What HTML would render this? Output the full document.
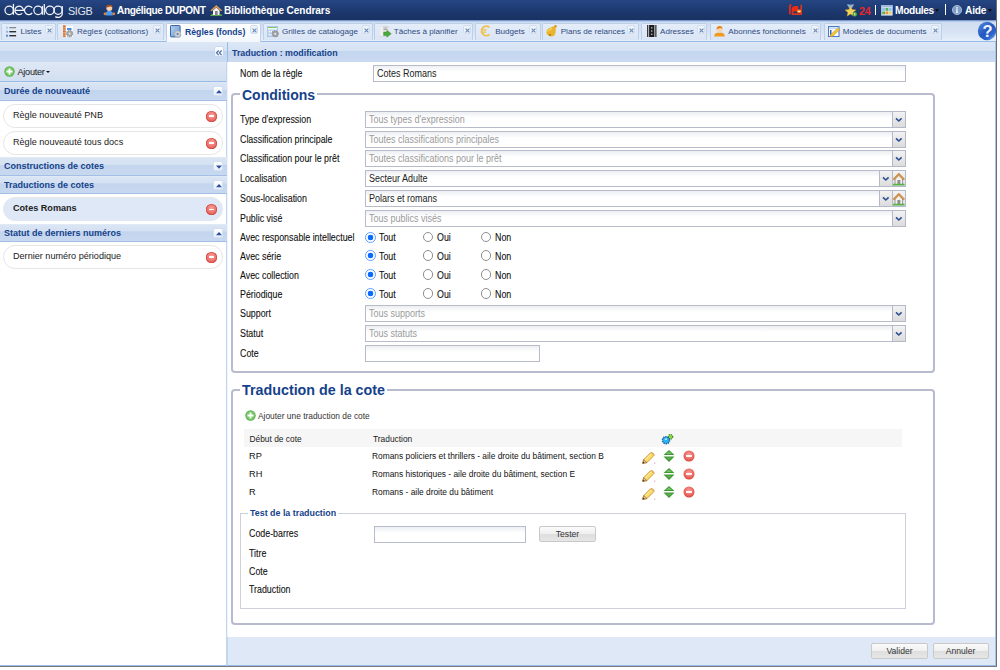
<!DOCTYPE html>
<html><head><meta charset="utf-8">
<style>
*{box-sizing:border-box;margin:0;padding:0}
html,body{width:1000px;height:670px;overflow:hidden;background:#fff;font-family:"Liberation Sans",sans-serif;}
.a{position:absolute}
svg{display:block}
.tab svg{display:block}
#frame{position:absolute;left:0;top:0;width:997px;height:667px;border-right:1px solid #6e6e6e;border-bottom:1px solid #7a7a7a;overflow:hidden}
#hdr{left:0;top:0;width:996px;height:20px;background:linear-gradient(#254583,#1c386e 60%,#1a3161)}
#tabs{left:0;top:20px;width:996px;height:22px;background:linear-gradient(#5a7ab4 0,#9ab8e4 1px,#d0ddf1 2px,#d8e4f4 60%,#e6eefa);border-bottom:1px solid #99bbe8}
.tab{position:absolute;top:3px;height:17px;border:1px solid #bcd0ea;border-bottom:none;border-radius:2px 2px 0 0;background:linear-gradient(#e4edf9,#dae5f5);font-size:8.1px;color:#2e4a80;white-space:nowrap}
.tab.act{height:19px;background:linear-gradient(#ffffff,#f3f7fc);color:#15428b;font-weight:bold;font-size:8.7px;z-index:2}
.tab .tt{top:2px;line-height:12px}
.tab .x{position:absolute;top:1px;width:8px;height:9px;border:1px solid #d0def0;border-radius:2px;background:#eef4fb}
.ph{height:20px;padding-top:1.5px;background:linear-gradient(#dde8f6 0%,#d5e2f3 45%,#c4d6ef 47%,#c9daf1 100%);color:#15428b;font-weight:bold;font-size:8.85px;line-height:19px;white-space:nowrap}
.lbl{position:absolute;font-size:10px;transform:scaleX(0.885);transform-origin:0 0;color:#111;white-space:nowrap;line-height:12px;-webkit-text-stroke:0.1px #111}
.cmb{position:absolute;height:17px;border:1px solid #b8bbc9;background:linear-gradient(#eceef2 0,#fff 6px);font-size:10px;line-height:16px;padding-left:3px;color:#222;white-space:nowrap}
.cmb .t{display:inline-block;transform:scaleX(0.9);transform-origin:0 0}
.cmb.ph2{color:#9a9a9a}
.trg{position:absolute;top:-1px;width:14px;height:17px;border:1px solid #b5b8c8;background:linear-gradient(#f2f2f2,#dcdcdc)}
.trg svg{position:absolute;left:3px;top:5px}
.rad{position:absolute;width:10.5px;height:10.5px;border-radius:50%;border:1px solid #8f8f8f;background:#fff}
.rad.on{width:11px;height:11px;border:1.5px solid #5aa2ff;background:radial-gradient(circle,#0b6bff 0 2.6px,#fff 3.1px)}
.fs{position:absolute;border:2px solid #b8bbcd;border-radius:4px}
.leg{position:absolute;background:#fff;color:#15428b;font-weight:bold;white-space:nowrap;padding:0 2px}
.grp{position:absolute;left:0;width:227px;height:19px;background:linear-gradient(#e6eef9 0,#dae5f4 1px,#d4e1f2 42%,#c3d5ee 45%,#c7d8ef 100%);border-bottom:1px solid #a3bfe6;color:#15428b;font-weight:bold;font-size:9px;line-height:18px;padding-left:4px;white-space:nowrap}
.tool{position:absolute;width:10px;height:10px;border:1px solid #d2e0f2;border-radius:2px;background:linear-gradient(#ffffff,#e6eef9)}
.item{position:absolute;left:3px;width:220px;height:24px;border:1px solid #e6e6e6;border-radius:12px;background:#fff;font-size:9.1px;color:#1a1a1a;line-height:21px;padding-left:9px;white-space:nowrap}
.del{position:absolute;width:11px;height:11px;border-radius:50%;background:radial-gradient(circle at 50% 40%,#f7a4a0 0,#ec6f68 55%,#d9443c 100%);box-shadow:inset 0 0 0 0.6px #c9403a}
.del:after{content:"";position:absolute;left:2.6px;top:4.6px;width:5.8px;height:1.8px;background:#fff;border-radius:0.5px}
.btn{position:absolute;height:16px;border:1px solid #c9c9c9;border-radius:2px;background:linear-gradient(#fbfbfb 0%,#efefef 50%,#dedede 51%,#e6e6e6 100%);font-size:8.6px;color:#333;text-align:center;line-height:14.5px}
.tr{position:absolute;font-size:8.4px;color:#111;white-space:nowrap;line-height:10px}
</style></head><body>
<div id="frame">
  <div id="hdr" class="a">
    <svg class="a" style="left:0;top:0" width="66" height="20" viewBox="0 0 66 20" fill="none" stroke="#f4f6fa" stroke-width="1.25"><circle cx="9.2" cy="10.35" r="4.25"/><path d="M13.45 3.9 V14.7"/><path d="M14.9 10.35 H23.4 A4.25 4.25 0 1 0 22.2 13.4"/><path d="M32.2 7.9 A4.25 4.25 0 1 0 32.2 12.8"/><circle cx="38.1" cy="10.35" r="4.25"/><path d="M42.35 6.1 V14.7"/><path d="M44.3 3.9 V14.7"/><circle cx="49.9" cy="10.35" r="4.25"/><circle cx="58.1" cy="10.2" r="4.1"/><path d="M62.2 6.1 V14.2 A4.2 3.2 0 0 1 55.3 16.6"/></svg>
    <div class="a" style="left:68px;top:3.5px;font-size:10.8px;color:#e2e6ec;line-height:14px;letter-spacing:-0.4px">SIGB</div>
    <svg class="a" style="left:103px;top:4px" width="13" height="12" viewBox="0 0 13 12"><path d="M2.8 11.5 L3 8.6 Q3.6 6.7 6.3 6.7 Q9 6.7 9.6 8.6 L9.8 11.5Z" fill="#4d9af0"/><circle cx="6.3" cy="3.9" r="3" fill="#f6d2ae"/><path d="M3.2 3.8 Q3.2 0.8 6.3 0.8 Q9.4 0.8 9.4 3.6 Q8 2.3 6.3 2.7 Q4.6 3 3.2 3.8Z" fill="#a0521a"/><circle cx="2" cy="9.8" r="1.4" fill="#e88a32"/><circle cx="10.8" cy="9.8" r="1.4" fill="#e88a32"/></svg>
    <div class="a" style="left:117px;top:4.4px;font-size:10.1px;font-weight:bold;color:#fff;line-height:14px;letter-spacing:-0.35px">Angélique DUPONT</div>
    <svg class="a" style="left:210px;top:4px" width="13" height="12" viewBox="0 0 13 12"><path d="M3 6.6 L6.3 3.6 L9.6 6.6 V11.3 H3Z" fill="#f4f4f4"/><path d="M0.3 6.4 L6.3 1 L12.3 6.4 L10.9 7.3 L6.3 3.2 L1.7 7.3Z" fill="#d99a4e"/><rect x="5" y="7" width="2.7" height="4.3" fill="#858585"/><path d="M0.3 11.6 Q0.8 9.7 3 9.9 V11.6Z M9.6 9.9 Q11.8 9.7 12.3 11.6 H9.6Z" fill="#5cb04a"/><rect x="0.5" y="11" width="11.6" height="0.8" fill="#5cb04a"/></svg>
    <div class="a" style="left:224px;top:4.4px;font-size:10.1px;font-weight:bold;color:#fff;line-height:14px;letter-spacing:-0.1px">Bibliothèque Cendrars</div>
    <svg class="a" style="left:789px;top:4px" width="14" height="11" viewBox="0 0 14 11"><path d="M2.3 0.8 Q0.8 1 0.8 3 V10.2" stroke="#f02a10" stroke-width="1.9" fill="none"/><path d="M12.2 0.8 V10.2 H3.5 V3.5" stroke="#d8341e" stroke-width="1.7" fill="none"/><path d="M3.5 3.5 Q4 2 6 2 H8.8 Q9.6 2.5 9.3 5 L7.5 7.5 H3.5Z" fill="#f02a10"/><rect x="8" y="5.5" width="4" height="3.6" rx="1" fill="#f07a10"/><rect x="8.8" y="6.8" width="2.6" height="1" fill="#fff"/></svg>
    <svg class="a" style="left:844px;top:4px" width="14" height="13" viewBox="0 0 14 13"><path d="M2.8 0.5 H10.2 L8 4 H5Z" fill="#7f9fc8"/><path d="M4 0.5 L6.5 3.5 L9 0.5" stroke="#b8cce6" stroke-width="0.8" fill="none"/><path d="M6.5 2.3 L8.1 5.6 L11.8 6 L9 8.4 L9.8 12 L6.5 10.1 L3.2 12 L4 8.4 L1.2 6 L4.9 5.6Z" fill="#f5d35a" stroke="#d8a830" stroke-width="0.5"/><circle cx="10.8" cy="10.2" r="2.2" fill="#4aa83a"/><rect x="10.3" y="9" width="1" height="2.4" fill="#e0f0d8"/></svg>
    <div class="a" style="left:859px;top:4.2px;font-size:10.8px;font-weight:bold;color:#e8262a;line-height:14px;letter-spacing:-0.3px">24</div>
    <div class="a" style="left:875px;top:4.5px;width:1.2px;height:10px;background:#fff"></div>
    <svg class="a" style="left:880.5px;top:5px" width="12" height="11" viewBox="0 0 12 11"><rect x="0.3" y="0.3" width="11.2" height="10" fill="#dfeaf6" stroke="#a8c0de" stroke-width="0.6"/><rect x="0.3" y="0.3" width="11.2" height="2" fill="#9cb8e0"/><rect x="1.2" y="3" width="2.8" height="2.8" fill="#8cc0f0"/><rect x="4.5" y="3" width="2.8" height="2.8" fill="#58b048"/><rect x="7.8" y="3" width="2.8" height="2.8" fill="#8cc0f0"/><rect x="1.2" y="6.5" width="2.8" height="2.8" fill="#58b048"/><rect x="4.5" y="6.5" width="2.8" height="2.8" fill="#f0904a"/><rect x="7.8" y="6.5" width="2.8" height="2.8" fill="#f0d060"/></svg>
    <div class="a" style="left:895px;top:4.4px;font-size:10.2px;font-weight:bold;color:#fff;line-height:14px;letter-spacing:-0.35px">Modules</div>
    <div class="a" style="left:935px;top:9px;width:0;height:0;border-left:2.5px solid transparent;border-right:2.5px solid transparent;border-top:3px solid #111"></div>
    <div class="a" style="left:945px;top:4px;width:1.2px;height:11px;background:#fff"></div>
    <svg class="a" style="left:951.5px;top:5px" width="10" height="10" viewBox="0 0 10 10"><circle cx="5" cy="5" r="4.6" fill="#7f9cc8" stroke="#b8cae4" stroke-width="0.8"/><circle cx="5" cy="2.9" r="0.8" fill="#fff"/><path d="M4.3 4.3 H5.6 V7.4 H6.3 V8 H3.8 V7.4 H4.4Z" fill="#fff"/></svg>
    <div class="a" style="left:965px;top:4.4px;font-size:10.2px;font-weight:bold;color:#fff;line-height:14px;letter-spacing:-0.2px">Aide</div>
    <div class="a" style="left:988px;top:9px;width:0;height:0;border-left:2.5px solid transparent;border-right:2.5px solid transparent;border-top:3px solid #111"></div>
  </div>
  <div id="tabs" class="a">
<div class="tab" style="left:1px;width:55px"><span class="a tt" style="left:18.5px">Listes</span><span class="x" style="left:42.8px"><svg class="a" style="left:1.2px;top:1.6px" width="5" height="5" viewBox="0 0 5 5"><path d="M0.6 0.6 L4.4 4.4 M4.4 0.6 L0.6 4.4" stroke="#6f8cba" stroke-width="1.2"/></svg></span></div>
<div class="tab" style="left:57px;width:107px"><span class="a tt" style="left:19px">Règles (cotisations)</span><span class="x" style="left:94.8px"><svg class="a" style="left:1.2px;top:1.6px" width="5" height="5" viewBox="0 0 5 5"><path d="M0.6 0.6 L4.4 4.4 M4.4 0.6 L0.6 4.4" stroke="#6f8cba" stroke-width="1.2"/></svg></span></div>
<div class="tab act" style="left:166px;width:95px"><span class="a tt" style="left:18px">Règles (fonds)</span><span class="x" style="left:83.3px"><svg class="a" style="left:1.2px;top:1.6px" width="5" height="5" viewBox="0 0 5 5"><path d="M0.6 0.6 L4.4 4.4 M4.4 0.6 L0.6 4.4" stroke="#6f8cba" stroke-width="1.2"/></svg></span></div>
<div class="tab" style="left:263px;width:110px"><span class="a tt" style="left:18px">Grilles de catalogage</span><span class="x" style="left:98.3px"><svg class="a" style="left:1.2px;top:1.6px" width="5" height="5" viewBox="0 0 5 5"><path d="M0.6 0.6 L4.4 4.4 M4.4 0.6 L0.6 4.4" stroke="#6f8cba" stroke-width="1.2"/></svg></span></div>
<div class="tab" style="left:374px;width:99px"><span class="a tt" style="left:18.69999999999999px">Tâches à planifier</span><span class="x" style="left:87.8px"><svg class="a" style="left:1.2px;top:1.6px" width="5" height="5" viewBox="0 0 5 5"><path d="M0.6 0.6 L4.4 4.4 M4.4 0.6 L0.6 4.4" stroke="#6f8cba" stroke-width="1.2"/></svg></span></div>
<div class="tab" style="left:475px;width:66px"><span class="a tt" style="left:19.19999999999999px">Budgets</span><span class="x" style="left:52.8px"><svg class="a" style="left:1.2px;top:1.6px" width="5" height="5" viewBox="0 0 5 5"><path d="M0.6 0.6 L4.4 4.4 M4.4 0.6 L0.6 4.4" stroke="#6f8cba" stroke-width="1.2"/></svg></span></div>
<div class="tab" style="left:542px;width:97px"><span class="a tt" style="left:17.700000000000045px">Plans de relances</span><span class="x" style="left:84.3px"><svg class="a" style="left:1.2px;top:1.6px" width="5" height="5" viewBox="0 0 5 5"><path d="M0.6 0.6 L4.4 4.4 M4.4 0.6 L0.6 4.4" stroke="#6f8cba" stroke-width="1.2"/></svg></span></div>
<div class="tab" style="left:641px;width:66px"><span class="a tt" style="left:18px">Adresses</span><span class="x" style="left:54.8px"><svg class="a" style="left:1.2px;top:1.6px" width="5" height="5" viewBox="0 0 5 5"><path d="M0.6 0.6 L4.4 4.4 M4.4 0.6 L0.6 4.4" stroke="#6f8cba" stroke-width="1.2"/></svg></span></div>
<div class="tab" style="left:710px;width:111px"><span class="a tt" style="left:17.299999999999955px">Abonnés fonctionnels</span><span class="x" style="left:99.8px"><svg class="a" style="left:1.2px;top:1.6px" width="5" height="5" viewBox="0 0 5 5"><path d="M0.6 0.6 L4.4 4.4 M4.4 0.6 L0.6 4.4" stroke="#6f8cba" stroke-width="1.2"/></svg></span></div>
<div class="tab" style="left:824px;width:118px"><span class="a tt" style="left:17.799999999999955px">Modèles de documents</span><span class="x" style="left:105.8px"><svg class="a" style="left:1.2px;top:1.6px" width="5" height="5" viewBox="0 0 5 5"><path d="M0.6 0.6 L4.4 4.4 M4.4 0.6 L0.6 4.4" stroke="#6f8cba" stroke-width="1.2"/></svg></span></div>
<div class="a" style="left:6px;top:6px;z-index:3"><svg width="11" height="11" viewBox="0 0 11 11"><rect x="0" y="0.7" width="2" height="2" fill="#aacbf2"/><rect x="0" y="4.7" width="2" height="2" fill="#8db7ec"/><rect x="0" y="8.7" width="2" height="2" fill="#4f8fe2"/><rect x="3.3" y="1" width="6.8" height="1.3" fill="#8a8a8a"/><rect x="3.3" y="5" width="6.8" height="1.4" fill="#303030"/><rect x="3.3" y="9" width="6.8" height="1.4" fill="#303030"/></svg></div><div class="a" style="left:62px;top:5px;z-index:3"><svg width="13" height="13" viewBox="0 0 13 13"><rect x="1" y="0" width="2.6" height="12" fill="#ec9a62"/><path d="M1 1.5 H3.6 M1 4 H3.6 M1 6.5 H3.6 M1 9 H3.6 M1 11.3 H3.6" stroke="#c9662a" stroke-width="0.8"/><rect x="4" y="1" width="7" height="11" fill="#fbfcfe"/><rect x="5" y="3" width="4.5" height="2" fill="#4d8de0"/><circle cx="7.6" cy="8.6" r="3.1" fill="#a8a8a8" stroke="#8e8e8e" stroke-width="1.1" stroke-dasharray="1.2 0.9"/><circle cx="7.6" cy="8.6" r="1.1" fill="#e2e2e2"/></svg></div><div class="a" style="left:170px;top:5px;z-index:3"><svg width="13" height="13" viewBox="0 0 13 13"><defs><linearGradient id="bk" x1="0" y1="0" x2="1" y2="1"><stop offset="0" stop-color="#c4dcf2"/><stop offset="1" stop-color="#5a8ccb"/></linearGradient></defs><rect x="0.5" y="0.5" width="9.6" height="11.4" rx="0.7" fill="url(#bk)" stroke="#3b67a5" stroke-width="1"/><rect x="1.6" y="1.4" width="7.4" height="1" fill="#8eb2dc"/><circle cx="7.6" cy="9" r="3" fill="#d0d0d0" stroke="#b8b8b8" stroke-width="1.1" stroke-dasharray="1.2 0.9"/><circle cx="7.6" cy="9" r="1.1" fill="#4a80c8"/></svg></div><div class="a" style="left:267px;top:6px;z-index:3"><svg width="13" height="12" viewBox="0 0 13 12"><rect x="0.3" y="0.3" width="10.4" height="10.4" fill="#c0d6f0" stroke="#9fbbe4" stroke-width="0.6"/><rect x="1" y="1" width="9" height="1.2" fill="#80d060"/><rect x="1" y="2.2" width="9" height="1.2" fill="#ffffff"/><rect x="2" y="5" width="1.2" height="1.2" fill="#fff"/><rect x="4" y="5" width="1.2" height="1.2" fill="#fff"/><rect x="2" y="8" width="1.2" height="1.2" fill="#fff"/><rect x="4" y="8" width="1.2" height="1.2" fill="#fff"/><circle cx="8.2" cy="7.8" r="3" fill="#a2a2a2" stroke="#888" stroke-width="1.1" stroke-dasharray="1.2 0.9"/><circle cx="8.2" cy="7.8" r="1.1" fill="#e2eaf4"/></svg></div><div class="a" style="left:380px;top:6px;z-index:3"><svg width="12" height="12" viewBox="0 0 12 12"><rect x="0.3" y="0.2" width="7.7" height="10" fill="#e6e6e6" stroke="#c4c4c4" stroke-width="0.5"/><rect x="0.3" y="0.2" width="2.2" height="10" fill="#f4f4f4"/><path d="M3.5 2 H7 M3.5 3.5 H7" stroke="#9a9a9a" stroke-width="0.8"/><path d="M3.6 6 H6.8 V4.2 L11.3 7.7 L6.8 11.2 V9.4 H3.6Z" fill="#4aa83c" stroke="#2f8a2a" stroke-width="0.4"/></svg></div><div class="a" style="left:480px;top:5px;z-index:3"><svg width="11" height="12" viewBox="0 0 11 12"><path d="M9.4 2.3 A4.7 4.7 0 1 0 9.4 9.5" stroke="#f0c04a" stroke-width="1.8" fill="none"/><path d="M0.8 4.8 H6.6 M0.8 7.1 H6.2" stroke="#f0c04a" stroke-width="1.3"/></svg></div><div class="a" style="left:545px;top:5px;z-index:3"><svg width="13" height="12" viewBox="0 0 13 12"><path d="M1.5 6.5 Q2 3.5 5.5 2.5 L10 0.8 Q11.5 4 10.5 8 L9 11 Q6 12 3.5 10.5 Q0.8 9 1.5 6.5Z" fill="#eab52c"/><path d="M3 6.5 Q4 4 7 3.5" stroke="#fbe48a" stroke-width="1" fill="none"/><circle cx="10.6" cy="1.2" r="1.2" fill="#d89a20"/><ellipse cx="5" cy="9.8" rx="1.3" ry="0.9" fill="#b07818"/></svg></div><div class="a" style="left:647px;top:5px;z-index:3"><svg width="10" height="12" viewBox="0 0 10 12"><rect x="0" y="0" width="1.3" height="12" fill="#3a3a3a"/><rect x="2.1" y="0" width="5.3" height="12" fill="#1e1e1e"/><rect x="8.2" y="0" width="1.3" height="12" fill="#3a3a3a"/><rect x="4.3" y="2.2" width="1" height="1.3" fill="#fff"/><rect x="4.3" y="5.4" width="1" height="1.3" fill="#fff"/><rect x="4.3" y="8.6" width="1" height="1.3" fill="#fff"/></svg></div><div class="a" style="left:714px;top:5.800000000000001px;z-index:3"><svg width="11" height="11" viewBox="0 0 11 11"><path d="M0.2 10.6 Q0 6.6 5.5 6.6 Q11 6.6 10.8 10.6Z" fill="#f39a1c"/><circle cx="5.5" cy="3.8" r="2.9" fill="#f8d6ae"/><path d="M2.5 3.6 Q2.5 0 5.5 0 Q8.5 0 8.5 3.3 Q7 1.6 5.5 2.3 Q4 2.7 2.5 3.6Z" fill="#ef7d10"/></svg></div><div class="a" style="left:828px;top:6px;z-index:3"><svg width="12" height="11" viewBox="0 0 12 11"><rect x="0.5" y="0.5" width="10.5" height="10" fill="#fff" stroke="#4a7cc8" stroke-width="1.1"/><rect x="1.2" y="1.2" width="9" height="2" fill="#c8dcf4"/><rect x="2" y="4" width="1.5" height="5.5" fill="#2c64b8"/><path d="M2 10.8 L3 8.3 L9.6 2.2 L11.6 3.8 L5 10Z" fill="#f4c838" stroke="#c88a28" stroke-width="0.6"/></svg></div>
<svg class="a" style="left:977px;top:0.5px" width="20" height="20" viewBox="0 0 20 20"><defs><linearGradient id="hg" x1="0.15" y1="0.1" x2="0.9" y2="0.95"><stop offset="0" stop-color="#4a7fd8"/><stop offset="0.45" stop-color="#2558c0"/><stop offset="0.75" stop-color="#2a64cc"/><stop offset="1" stop-color="#6aaef6"/></linearGradient></defs><circle cx="10" cy="10" r="9.2" fill="url(#hg)"/><text x="10.5" y="16.3" text-anchor="middle" font-family="Liberation Sans" font-weight="bold" font-size="16.5" fill="#f4f6fb">?</text></svg>
</div>

  <!-- left panel -->
  <div class="a ph" style="left:0;top:42px;width:227px"></div>
  <div class="a" style="left:0;top:62px;width:227px;height:20px;background:linear-gradient(#dfe8f5,#d2dff0);border-bottom:1px solid #99bbe8;border-right:1px solid #c3d6f0"></div>
  <div class="a" style="left:0;top:82px;width:227px;height:584px;background:#fff;border-right:1px solid #c3d6f0;border-bottom:1px solid #99bbe8"></div>
  <div class="a" style="left:213.5px;top:46px;width:10px;height:11px;border:1px solid #c8d9ef;border-radius:2px;background:linear-gradient(#ffffff,#e9f0fa)"><svg class="a" style="left:0.5px;top:1.5px" width="8" height="8" viewBox="0 0 8 8"><path d="M3.7 1.5 L1.5 3.8 L3.7 6.1 M6.6 1.5 L4.4 3.8 L6.6 6.1" stroke="#4d6fa8" stroke-width="1.2" fill="none"/></svg></div>
  <div class="a" style="left:4px;top:66px"><svg width="11" height="11" viewBox="0 0 11 11"><circle cx="5.5" cy="5.5" r="5.2" fill="#5cb34e"/><circle cx="5.5" cy="5.5" r="4.2" fill="#7dc86c"/><path d="M5.5 2.5 V8.5 M2.5 5.5 H8.5" stroke="#fff" stroke-width="1.8"/></svg></div>
  <div class="a" style="left:17.5px;top:66.5px;font-size:9.2px;color:#222;line-height:11px;letter-spacing:-0.3px">Ajouter</div>
  <div class="a" style="left:46px;top:71px;width:0;height:0;border-left:2px solid transparent;border-right:2px solid transparent;border-top:2.5px solid #111"></div>
  <div class="grp" style="top:82px;height:19px">Durée de nouveauté</div><div class="tool" style="left:213px;top:86px"><svg class="a" style="left:0.5px;top:0.5px" width="8" height="8" viewBox="0 0 8 8"><path d="M1 5.2 L4 2 L7 5.2Z" fill="#2a4ea6"/></svg></div>
  <div class="item" style="top:103.5px;">Règle nouveauté PNB<div class="del" style="left:202px;top:6px"></div></div>
  <div class="item" style="top:130.5px;">Règle nouveauté tous docs<div class="del" style="left:202px;top:6px"></div></div>
  <div class="grp" style="top:157px;height:19px">Constructions de cotes</div><div class="tool" style="left:213px;top:161px"><svg class="a" style="left:0.5px;top:0.5px" width="8" height="8" viewBox="0 0 8 8"><path d="M1 2.6 L4 5.8 L7 2.6Z" fill="#2a4ea6"/></svg></div>
  <div class="grp" style="top:176px;height:18px">Traductions de cotes</div><div class="tool" style="left:213px;top:180px"><svg class="a" style="left:0.5px;top:0.5px" width="8" height="8" viewBox="0 0 8 8"><path d="M1 5.2 L4 2 L7 5.2Z" fill="#2a4ea6"/></svg></div>
  <div class="item" style="top:197px;background:#dfe8f6;border-color:#e3e8f0;font-weight:bold;color:#222">Cotes Romans<div class="del" style="left:202px;top:6px"></div></div>
  <div class="grp" style="top:224px;height:18px">Statut de derniers numéros</div><div class="tool" style="left:213px;top:228px"><svg class="a" style="left:0.5px;top:0.5px" width="8" height="8" viewBox="0 0 8 8"><path d="M1 5.2 L4 2 L7 5.2Z" fill="#2a4ea6"/></svg></div>
  <div class="item" style="top:244.5px;">Dernier numéro périodique<div class="del" style="left:202px;top:6px"></div></div>

  <!-- right panel -->
  <div class="a ph" style="left:227px;top:42px;width:769px;border-left:1px solid #99bbe8;border-right:1px solid #a8c4ea;padding-left:4px">Traduction : modification</div>
  <div class="a" style="left:227px;top:62px;width:769px;height:575px;background:#fff;border-left:1px solid #eef4fc;border-right:1px solid #a8c4ea"></div>
  <div class="lbl" style="left:240px;top:67.8px">Nom de la règle</div>
  <div class="cmb" style="left:373px;top:65px;width:533px;background:linear-gradient(#eef0f3 0,#fff 6px)"><span class="t">Cotes Romans</span></div>
  <div class="fs" style="left:231px;top:93px;width:704px;height:280px"></div>
  <div class="leg" style="left:240px;top:86.5px;font-size:14px;line-height:16px;letter-spacing:0px">Conditions</div>
  <div class="lbl" style="left:240px;top:113.5px">Type d'expression</div>
  <div class="cmb ph2" style="left:365px;top:111px;width:541px"><span class="t">Tous types d'expression</span><div class="trg" style="left:526px"><svg class="a" style="left:2.2px;top:5px" width="8" height="6" viewBox="0 0 8 6"><path d="M1 1.3 L3.8 4 L6.6 1.3" stroke="#2e4f94" stroke-width="1.6" fill="none"/></svg></div></div>
  <div class="lbl" style="left:240px;top:133.5px">Classification principale</div>
  <div class="cmb ph2" style="left:365px;top:131px;width:541px"><span class="t">Toutes classifications principales</span><div class="trg" style="left:526px"><svg class="a" style="left:2.2px;top:5px" width="8" height="6" viewBox="0 0 8 6"><path d="M1 1.3 L3.8 4 L6.6 1.3" stroke="#2e4f94" stroke-width="1.6" fill="none"/></svg></div></div>
  <div class="lbl" style="left:240px;top:153.0px">Classification pour le prêt</div>
  <div class="cmb ph2" style="left:365px;top:150px;width:541px"><span class="t">Toutes classifications pour le prêt</span><div class="trg" style="left:526px"><svg class="a" style="left:2.2px;top:5px" width="8" height="6" viewBox="0 0 8 6"><path d="M1 1.3 L3.8 4 L6.6 1.3" stroke="#2e4f94" stroke-width="1.6" fill="none"/></svg></div></div>
  <div class="lbl" style="left:240px;top:173.0px">Localisation</div>
  <div class="cmb" style="left:365px;top:170px;width:541px"><span class="t">Secteur Adulte</span><div class="trg" style="left:513px"><svg class="a" style="left:2.2px;top:5px" width="8" height="6" viewBox="0 0 8 6"><path d="M1 1.3 L3.8 4 L6.6 1.3" stroke="#2e4f94" stroke-width="1.6" fill="none"/></svg></div><div class="trg" style="left:526px;background:linear-gradient(#f4f4f4,#e0e0e0)"><svg class="a" style="left:0px;top:0.5px" width="12" height="14" viewBox="0 0 12 14"><path d="M1.3 6.8 L5.8 2.6 L10.3 6.8 V12.6 H1.3Z" fill="#f0efec"/><rect x="1.5" y="7" width="1" height="5.6" fill="#9a9a9a"/><rect x="9.1" y="7" width="1" height="5.6" fill="#9a9a9a"/><rect x="4.4" y="8" width="2.9" height="4.6" fill="#8f8f8f"/><path d="M0 7 L5.8 1 L11.6 7 L10.2 7.9 L5.8 3.4 L1.4 7.9Z" fill="#d49650" stroke="#b8742e" stroke-width="0.5"/><path d="M0 12.2 Q1 11.2 2.5 11.7 H9.1 Q10.6 11.2 11.6 12.2 V13.4 H0Z" fill="#58b444"/></svg></div></div>
  <div class="lbl" style="left:240px;top:192.5px">Sous-localisation</div>
  <div class="cmb" style="left:365px;top:190px;width:541px"><span class="t">Polars et romans</span><div class="trg" style="left:513px"><svg class="a" style="left:2.2px;top:5px" width="8" height="6" viewBox="0 0 8 6"><path d="M1 1.3 L3.8 4 L6.6 1.3" stroke="#2e4f94" stroke-width="1.6" fill="none"/></svg></div><div class="trg" style="left:526px;background:linear-gradient(#f4f4f4,#e0e0e0)"><svg class="a" style="left:0px;top:0.5px" width="12" height="14" viewBox="0 0 12 14"><path d="M1.3 6.8 L5.8 2.6 L10.3 6.8 V12.6 H1.3Z" fill="#f0efec"/><rect x="1.5" y="7" width="1" height="5.6" fill="#9a9a9a"/><rect x="9.1" y="7" width="1" height="5.6" fill="#9a9a9a"/><rect x="4.4" y="8" width="2.9" height="4.6" fill="#8f8f8f"/><path d="M0 7 L5.8 1 L11.6 7 L10.2 7.9 L5.8 3.4 L1.4 7.9Z" fill="#d49650" stroke="#b8742e" stroke-width="0.5"/><path d="M0 12.2 Q1 11.2 2.5 11.7 H9.1 Q10.6 11.2 11.6 12.2 V13.4 H0Z" fill="#58b444"/></svg></div></div>
  <div class="lbl" style="left:240px;top:212.5px">Public visé</div>
  <div class="cmb ph2" style="left:365px;top:210px;width:541px"><span class="t">Tous publics visés</span><div class="trg" style="left:526px"><svg class="a" style="left:2.2px;top:5px" width="8" height="6" viewBox="0 0 8 6"><path d="M1 1.3 L3.8 4 L6.6 1.3" stroke="#2e4f94" stroke-width="1.6" fill="none"/></svg></div></div>
  <div class="lbl" style="left:240px;top:232.1px">Avec responsable intellectuel</div>
  <div class="rad on" style="left:364.8px;top:231.5px"></div><div class="lbl" style="left:378.8px;top:232.1px">Tout</div><div class="rad" style="left:422.6px;top:231.5px"></div><div class="lbl" style="left:436.6px;top:232.1px">Oui</div><div class="rad" style="left:480.5px;top:231.5px"></div><div class="lbl" style="left:494.5px;top:232.1px">Non</div>
  <div class="lbl" style="left:240px;top:250.9px">Avec série</div>
  <div class="rad on" style="left:364.8px;top:250.3px"></div><div class="lbl" style="left:378.8px;top:250.9px">Tout</div><div class="rad" style="left:422.6px;top:250.3px"></div><div class="lbl" style="left:436.6px;top:250.9px">Oui</div><div class="rad" style="left:480.5px;top:250.3px"></div><div class="lbl" style="left:494.5px;top:250.9px">Non</div>
  <div class="lbl" style="left:240px;top:269.8px">Avec collection</div>
  <div class="rad on" style="left:364.8px;top:269.2px"></div><div class="lbl" style="left:378.8px;top:269.8px">Tout</div><div class="rad" style="left:422.6px;top:269.2px"></div><div class="lbl" style="left:436.6px;top:269.8px">Oui</div><div class="rad" style="left:480.5px;top:269.2px"></div><div class="lbl" style="left:494.5px;top:269.8px">Non</div>
  <div class="lbl" style="left:240px;top:288.7px">Périodique</div>
  <div class="rad on" style="left:364.8px;top:288.1px"></div><div class="lbl" style="left:378.8px;top:288.7px">Tout</div><div class="rad" style="left:422.6px;top:288.1px"></div><div class="lbl" style="left:436.6px;top:288.7px">Oui</div><div class="rad" style="left:480.5px;top:288.1px"></div><div class="lbl" style="left:494.5px;top:288.7px">Non</div>
  <div class="lbl" style="left:240px;top:308.0px">Support</div>
  <div class="cmb ph2" style="left:365px;top:305px;width:541px"><span class="t">Tous supports</span><div class="trg" style="left:526px"><svg class="a" style="left:2.2px;top:5px" width="8" height="6" viewBox="0 0 8 6"><path d="M1 1.3 L3.8 4 L6.6 1.3" stroke="#2e4f94" stroke-width="1.6" fill="none"/></svg></div></div>
  <div class="lbl" style="left:240px;top:328.0px">Statut</div>
  <div class="cmb ph2" style="left:365px;top:325px;width:541px"><span class="t">Tous statuts</span><div class="trg" style="left:526px"><svg class="a" style="left:2.2px;top:5px" width="8" height="6" viewBox="0 0 8 6"><path d="M1 1.3 L3.8 4 L6.6 1.3" stroke="#2e4f94" stroke-width="1.6" fill="none"/></svg></div></div>
  <div class="lbl" style="left:240px;top:348.0px">Cote</div>
  <div class="cmb" style="left:365px;top:345px;width:175px"></div>
  <div class="fs" style="left:231px;top:389px;width:704px;height:236px"></div>
  <div class="leg" style="left:240px;top:382px;font-size:14.3px;line-height:16px">Traduction de la cote</div>
  <div class="a" style="left:244.5px;top:410px"><svg width="11" height="11" viewBox="0 0 11 11"><circle cx="5.5" cy="5.5" r="5.2" fill="#5cb34e"/><circle cx="5.5" cy="5.5" r="4.2" fill="#7dc86c"/><path d="M5.5 2.5 V8.5 M2.5 5.5 H8.5" stroke="#fff" stroke-width="1.8"/></svg></div>
  <div class="tr" style="left:258px;top:410.5px;color:#333">Ajouter une traduction de cote</div>
  <div class="a" style="left:244px;top:429px;width:658px;height:18px;background:#f6f6f6"></div>
  <div class="tr" style="left:249.5px;top:433.5px;color:#222">Début de cote</div>
  <div class="tr" style="left:373px;top:433.5px;color:#222">Traduction</div>
  <div class="a" style="left:660.5px;top:433px"><svg width="14" height="13" viewBox="0 0 14 13"><circle cx="9.5" cy="3.8" r="2.2" fill="#86d444" stroke="#3f8a20" stroke-width="1.3" stroke-dasharray="1.1 0.8"/><circle cx="9.5" cy="3.8" r="1.6" fill="#8ad848"/><circle cx="5" cy="7.2" r="3.5" fill="#22aaec" stroke="#1d5e9e" stroke-width="1.6" stroke-dasharray="1.3 0.9"/><circle cx="5" cy="7.2" r="2.6" fill="#2ab4f0"/><rect x="3.8" y="5.6" width="2.2" height="1.2" fill="#d8f0ff"/></svg></div>
  <div class="tr" style="left:249px;top:451px;font-size:9.2px">RP</div>
  <div class="tr" style="left:372px;top:451px">Romans policiers et thrillers - aile droite du bâtiment, section B</div>
  <div class="a" style="left:641.5px;top:452px"><svg width="14" height="12" viewBox="0 0 14 12"><path d="M0.7 11.3 L1.7 7.6 L8.4 0.9 Q9.5 -0.1 10.6 0.9 L11.6 1.9 Q12.5 3 11.6 4 L4.9 10.6 Z" fill="#f7dc68" stroke="#c8862a" stroke-width="0.8"/><path d="M2.6 8.6 L9.6 1.6" stroke="#fff3b0" stroke-width="0.9"/><path d="M9.2 0.6 L12 3.4" stroke="#f0a860" stroke-width="1.2"/><path d="M0.7 11.3 L1.7 7.6 L4.9 10.6Z" fill="#e8c8a0" stroke="#8a5a20" stroke-width="0.6"/><path d="M0.6 11.4 L1.1 9.6 L2.6 11Z" fill="#4a3010"/><rect x="12.4" y="10.7" width="0.8" height="0.8" fill="#b0207a"/></svg></div>
  <div class="a" style="left:662.8px;top:450px"><svg width="12" height="12" viewBox="0 0 12 12"><path d="M0.5 5 L6 0 L11.5 5Z" fill="#3f9a34"/><path d="M0.5 6.5 L6 12 L11.5 6.5Z" fill="#3f9a34"/><path d="M3 4 L6 1.5 L9 4Z" fill="#74c064"/><path d="M3 7.5 L6 10 L9 7.5Z" fill="#74c064" opacity="0.6"/></svg></div>
  <div class="a" style="left:682.8px;top:450px"><svg width="12" height="12" viewBox="0 0 12 12"><defs><radialGradient id="dg" cx="50%" cy="40%" r="60%"><stop offset="0" stop-color="#f7a4a0"/><stop offset="0.6" stop-color="#ec6f68"/><stop offset="1" stop-color="#d8443c"/></radialGradient></defs><circle cx="6" cy="6" r="5.5" fill="url(#dg)"/><rect x="3" y="5.1" width="6" height="1.8" fill="#fff"/></svg></div>
  <div class="tr" style="left:249px;top:469px;font-size:9.2px">RH</div>
  <div class="tr" style="left:372px;top:469px">Romans historiques - aile droite du bâtiment, section E</div>
  <div class="a" style="left:641.5px;top:470px"><svg width="14" height="12" viewBox="0 0 14 12"><path d="M0.7 11.3 L1.7 7.6 L8.4 0.9 Q9.5 -0.1 10.6 0.9 L11.6 1.9 Q12.5 3 11.6 4 L4.9 10.6 Z" fill="#f7dc68" stroke="#c8862a" stroke-width="0.8"/><path d="M2.6 8.6 L9.6 1.6" stroke="#fff3b0" stroke-width="0.9"/><path d="M9.2 0.6 L12 3.4" stroke="#f0a860" stroke-width="1.2"/><path d="M0.7 11.3 L1.7 7.6 L4.9 10.6Z" fill="#e8c8a0" stroke="#8a5a20" stroke-width="0.6"/><path d="M0.6 11.4 L1.1 9.6 L2.6 11Z" fill="#4a3010"/><rect x="12.4" y="10.7" width="0.8" height="0.8" fill="#b0207a"/></svg></div>
  <div class="a" style="left:662.8px;top:468px"><svg width="12" height="12" viewBox="0 0 12 12"><path d="M0.5 5 L6 0 L11.5 5Z" fill="#3f9a34"/><path d="M0.5 6.5 L6 12 L11.5 6.5Z" fill="#3f9a34"/><path d="M3 4 L6 1.5 L9 4Z" fill="#74c064"/><path d="M3 7.5 L6 10 L9 7.5Z" fill="#74c064" opacity="0.6"/></svg></div>
  <div class="a" style="left:682.8px;top:468px"><svg width="12" height="12" viewBox="0 0 12 12"><defs><radialGradient id="dg" cx="50%" cy="40%" r="60%"><stop offset="0" stop-color="#f7a4a0"/><stop offset="0.6" stop-color="#ec6f68"/><stop offset="1" stop-color="#d8443c"/></radialGradient></defs><circle cx="6" cy="6" r="5.5" fill="url(#dg)"/><rect x="3" y="5.1" width="6" height="1.8" fill="#fff"/></svg></div>
  <div class="tr" style="left:249px;top:487px;font-size:9.2px">R</div>
  <div class="tr" style="left:372px;top:487px">Romans - aile droite du bâtiment</div>
  <div class="a" style="left:641.5px;top:488px"><svg width="14" height="12" viewBox="0 0 14 12"><path d="M0.7 11.3 L1.7 7.6 L8.4 0.9 Q9.5 -0.1 10.6 0.9 L11.6 1.9 Q12.5 3 11.6 4 L4.9 10.6 Z" fill="#f7dc68" stroke="#c8862a" stroke-width="0.8"/><path d="M2.6 8.6 L9.6 1.6" stroke="#fff3b0" stroke-width="0.9"/><path d="M9.2 0.6 L12 3.4" stroke="#f0a860" stroke-width="1.2"/><path d="M0.7 11.3 L1.7 7.6 L4.9 10.6Z" fill="#e8c8a0" stroke="#8a5a20" stroke-width="0.6"/><path d="M0.6 11.4 L1.1 9.6 L2.6 11Z" fill="#4a3010"/><rect x="12.4" y="10.7" width="0.8" height="0.8" fill="#b0207a"/></svg></div>
  <div class="a" style="left:662.8px;top:486px"><svg width="12" height="12" viewBox="0 0 12 12"><path d="M0.5 5 L6 0 L11.5 5Z" fill="#3f9a34"/><path d="M0.5 6.5 L6 12 L11.5 6.5Z" fill="#3f9a34"/><path d="M3 4 L6 1.5 L9 4Z" fill="#74c064"/><path d="M3 7.5 L6 10 L9 7.5Z" fill="#74c064" opacity="0.6"/></svg></div>
  <div class="a" style="left:682.8px;top:486px"><svg width="12" height="12" viewBox="0 0 12 12"><defs><radialGradient id="dg" cx="50%" cy="40%" r="60%"><stop offset="0" stop-color="#f7a4a0"/><stop offset="0.6" stop-color="#ec6f68"/><stop offset="1" stop-color="#d8443c"/></radialGradient></defs><circle cx="6" cy="6" r="5.5" fill="url(#dg)"/><rect x="3" y="5.1" width="6" height="1.8" fill="#fff"/></svg></div>
  <div class="a" style="left:240px;top:513px;width:666px;height:96px;border:1px solid #cdd0dc"></div>
  <div class="leg" style="left:248px;top:507px;font-size:8.9px;line-height:12px">Test de la traduction</div>
  <div class="lbl" style="left:248.5px;top:528.3px">Code-barres</div>
  <div class="cmb" style="left:374px;top:526px;width:152px"></div>
  <div class="btn" style="left:539px;top:526px;width:57px">Tester</div>
  <div class="lbl" style="left:248.5px;top:547.9px">Titre</div>
  <div class="lbl" style="left:248.5px;top:565.9px">Cote</div>
  <div class="lbl" style="left:248.5px;top:584.3px">Traduction</div>
  <div class="a" style="left:227px;top:636.5px;width:769px;height:29.5px;background:#dfe8f6;border-left:1px solid #c3d6f0;border-bottom:1px solid #99bbe8;border-right:1px solid #a8c4ea"></div>
  <div class="btn" style="left:871px;top:643px;width:57px">Valider</div>
  <div class="btn" style="left:932.5px;top:643px;width:56px">Annuler</div>
</div>
</body></html>
